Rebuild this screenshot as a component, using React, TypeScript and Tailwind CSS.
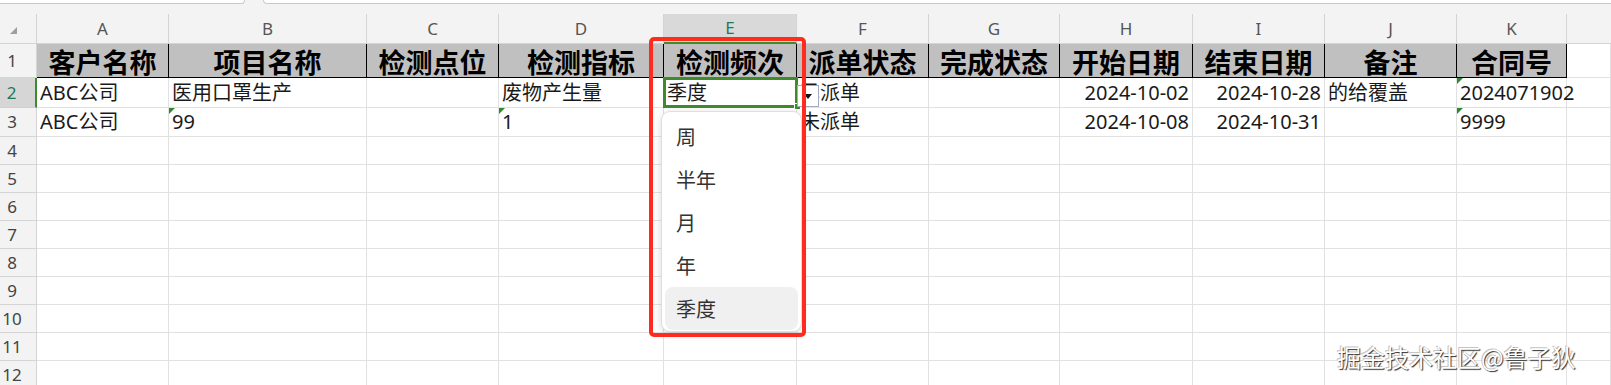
import React from "react"

const GRID =
  "grid grid-cols-[37px_132px_198px_132px_165px_133px_132px_131px_133px_132px_132px_110px_1fr] grid-rows-[30px_34px_30px_29px_repeat(9,28px)]"

const LETTERS = ["A", "B", "C", "D", "E", "F", "G", "H", "I", "J", "K"]
const HEADERS = ["客户名称", "项目名称", "检测点位", "检测指标", "检测频次", "派单状态", "完成状态", "开始日期", "结束日期", "备注", "合同号"]

type Cell = { t?: string; right?: boolean; flag?: boolean }

const DATA: Cell[][] = [
  [
    { t: "ABC公司" },
    { t: "医用口罩生产" },
    {},
    { t: "废物产生量" },
    { t: "季度" },
    { t: "已派单" },
    {},
    { t: "2024-10-02", right: true },
    { t: "2024-10-28", right: true },
    { t: "的给覆盖" },
    { t: "2024071902", flag: true },
  ],
  [
    { t: "ABC公司" },
    { t: "99", flag: true },
    {},
    { t: "1", flag: true },
    {},
    { t: "未派单" },
    {},
    { t: "2024-10-08", right: true },
    { t: "2024-10-31", right: true },
    {},
    { t: "9999", flag: true },
  ],
]

const OPTIONS = ["周", "半年", "月", "年", "季度"]

const UI_FONT = "font-['Noto_Sans','Noto_Sans_CJK_SC',sans-serif]"
const GRID_LINE = "border-r border-b border-[#e1e1e1]"

function RowNumber({ n, active }: { n: number; active?: boolean }) {
  return (
    <div
      className={`flex items-center justify-center pr-[12px] border-b border-r text-[17px] ${
        active
          ? "bg-[#d6d6d6] text-[#1e7a55] border-b-[#d0d0d0] border-r-2 border-r-[#3e8b2c]"
          : "bg-[#f3f3f3] text-[#444] border-[#d4d4d4]"
      }`}
    >
      {n}
    </div>
  )
}

export default function App() {
  return (
    <div className={`relative w-[1611px] h-[385px] overflow-hidden bg-white ${UI_FONT}`}>
      {/* top strip (formula bar edge) */}
      <div className="flex h-[14px] bg-[#f3f3f3]">
        <div className="w-[245px] h-[4px] bg-white border-b border-r border-[#c9c9c9] rounded-br-[4px]" />
        <div className="flex-1 ml-[18px] h-[4px] bg-white border-b border-l border-[#c9c9c9] rounded-bl-[4px]" />
      </div>

      <div className={GRID}>
        {/* column letters */}
        <div className="bg-[#f3f3f3] border-r border-b border-[#d4d4d4] pl-[10px] pt-[13px]">
          <svg width="7" height="7" viewBox="0 0 7 7">
            <polygon points="7,0 7,7 0,7" fill="#9e9e9e" />
          </svg>
        </div>
        {LETTERS.map((l) => (
          <div
            key={l}
            className={`flex items-center justify-center text-[17px] border-r border-b ${
              l === "E"
                ? "bg-[#d9d9d9] text-[#1e7a55] border-r-[#d4d4d4] border-b-2 border-b-[#3e8b2c]"
                : "bg-[#f3f3f3] text-[#555] border-[#d4d4d4]"
            }`}
          >
            {l}
          </div>
        ))}
        <div className="bg-[#f3f3f3] border-b border-[#d4d4d4]" />

        {/* row 1: header */}
        <RowNumber n={1} />
        {HEADERS.map((h) => (
          <div
            key={h}
            className="flex items-center justify-center bg-[#c0c0c0] border-r border-b border-black font-['Noto_Sans_CJK_SC',sans-serif] font-bold text-[27px] leading-[32px] pt-[3px] text-black whitespace-nowrap"
          >
            {h}
          </div>
        ))}
        <div className={GRID_LINE} />

        {/* data rows */}
        {DATA.map((row, ri) => (
          <React.Fragment key={ri}>
            <RowNumber n={ri + 2} active={ri === 0} />
            {row.map((c, ci) => (
              <div
                key={ci}
                className={`relative flex items-center ${c.right ? "justify-end pr-[3px]" : "pl-[3px]"} ${GRID_LINE} text-[20px] leading-none text-[#1a1a1a] whitespace-nowrap`}
              >
                {c.flag && (
                  <span className="absolute top-0 left-0 w-0 h-0 border-t-[6px] border-r-[6px] border-t-[#2f8a2f] border-r-transparent" />
                )}
                {c.t}
              </div>
            ))}
            <div className={GRID_LINE} />
          </React.Fragment>
        ))}

        {/* empty rows */}
        {Array.from({ length: 9 }, (_, i) => (
          <React.Fragment key={i}>
            <RowNumber n={i + 4} />
            {Array.from({ length: 12 }, (_, j) => (
              <div key={j} className={GRID_LINE} />
            ))}
          </React.Fragment>
        ))}
      </div>

      {/* active cell E2 */}
      <div className="absolute left-[663px] top-[77px] w-[135px] h-[31px] border-[3px] border-[#3e8b2c]" />
      <div className="absolute left-[795px] top-[104px] w-[5px] h-[5px] bg-[#3e8b2c] outline outline-1 outline-white" />

      {/* list arrow button */}
      <div className="absolute left-[797px] top-[85px] w-[22px] h-[22px] bg-white border border-[#a3abbd] flex items-center justify-center">
        <svg width="8" height="5" viewBox="0 0 8 5">
          <polygon points="0,0 8,0 4,5" fill="#111" />
        </svg>
      </div>

      {/* dropdown list */}
      <div className="absolute left-[661px] top-[111px] w-[141px] h-[221px] bg-white border border-[#dedede] rounded-[9px] shadow-[0_2px_8px_rgba(0,0,0,0.14)] p-[3px] font-['Noto_Sans_CJK_SC',sans-serif]">
        {OPTIONS.map((o) => (
          <div
            key={o}
            className={`flex items-center h-[43px] px-[11px] rounded-[8px] text-[20px] text-[#333] ${
              o === "季度" ? "bg-[#f0f0f0]" : ""
            }`}
          >
            {o}
          </div>
        ))}
      </div>

      {/* red annotation box */}
      <div className="absolute left-[649px] top-[37px] w-[157px] h-[300px] border-4 border-[#ff2b1c] rounded-[5px]" />

      {/* watermark */}
      <div className="absolute left-[1337px] top-[345px] text-[24px] leading-none text-white font-['Noto_Sans_CJK_SC',sans-serif] [text-shadow:1px_1px_1px_#2e2e2e,-1px_-1px_0_#c4c4c4]">
        掘金技术社区@鲁子狄
      </div>
    </div>
  )
}
